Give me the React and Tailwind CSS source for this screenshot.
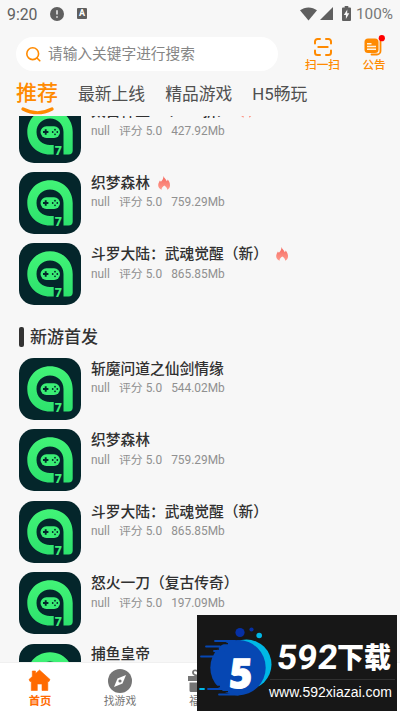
const HOT_GAMES = [
    { name: '太古神王2（0.05折）', size: '427.92Mb', hot: true },
    { name: '织梦森林', size: '759.29Mb', hot: true },
    { name: '斗罗大陆：武魂觉醒（新）', size: '865.85Mb', hot: true },
]

const NEW_GAMES = [
    { name: '斩魔问道之仙剑情缘', size: '544.02Mb' },
    { name: '织梦森林', size: '759.29Mb' },
    { name: '斗罗大陆：武魂觉醒（新）', size: '865.85Mb' },
    { name: '怒火一刀（复古传奇）', size: '197.09Mb' },
    { name: '捕鱼皇帝', size: '312.46Mb' },
]

function StatusBar() {
    return (
        <div className="flex h-[27px] shrink-0 items-center pl-[7px] pr-[7px] text-[#606060]">
            <span className="w-[43px] pt-[2px] text-[15.8px] leading-none">9:20</span>
            <svg className="h-[14px] w-[14px]" viewBox="0 0 14 14">
                <circle cx="7" cy="7" r="7" fill="#5f5f5f" />
                <path d="M7 3.2v4.4M7 9.2v1.6" stroke="#f0f0f0" strokeWidth="1.5" />
            </svg>
            <div className="ml-[13px] flex h-[11px] w-[10px] items-center justify-center rounded-[1px] bg-[#5f5f5f] text-[9px] font-bold leading-none text-white">A</div>
            <svg className="ml-auto h-[14px] w-[17px]" viewBox="0 0 17 14">
                <path d="M0 3.3C4.8-.6 12.2-.6 17 3.3L8.5 13.5Z" fill="#5f5f5f" />
            </svg>
            <svg className="ml-[3px] h-[13px] w-[13px]" viewBox="0 0 13 13">
                <path d="M13 0v13H0Z" fill="#5f5f5f" />
            </svg>
            <svg className="ml-[9px] h-[15px] w-[9px]" viewBox="0 0 9 15">
                <path d="M2.7 0h3.6v1.5H8a1 1 0 0 1 1 1V14a1 1 0 0 1-1 1H1a1 1 0 0 1-1-1V2.5a1 1 0 0 1 1-1h1.7Z" fill="#5f5f5f" />
                <path d="M5.3 3.5 1.8 9h2.1v4l3.4-5.7H5.2Z" fill="#f7f7f7" />
            </svg>
            <span className="ml-[5px] pt-[2px] text-[15.3px] leading-none text-[#777]">100%</span>
        </div>
    )
}

function SearchHeader() {
    return (
        <div className="flex h-[44px] shrink-0 items-start pl-[16px] pt-[10px] text-[#ff8a00]">
            <div className="flex h-[34px] w-[262px] items-center rounded-full bg-white">
                <svg className="ml-[10px] h-[15px] w-[15px]" viewBox="0 0 15 15" fill="none" stroke="#ff8a00" strokeWidth="1.6" strokeLinecap="round">
                    <circle cx="6.7" cy="6.7" r="5.9" />
                    <path d="m11.2 11.2 2.6 2.6" />
                </svg>
                <span className="ml-[7px] text-[14.7px] leading-none text-[#858585]">请输入关键字进行搜索</span>
            </div>
            <div className="ml-[26px] flex w-[37px] flex-col items-center">
                <svg className="mt-[1px] h-[18px] w-[18px]" viewBox="0 0 18 18" fill="none" stroke="#ff8a00" strokeWidth="2" strokeLinecap="round">
                    <path d="M1 5.5V3.5A2.500 2.500 0 0 1 3.500 1H6M12 1h2.500A2.500 2.500 0 0 1 17 3.500v2M17 12.500v2a2.500 2.500 0 0 1-2.500 2.500H12M6 17H3.500A2.500 2.500 0 0 1 1 14.500v-2M4.300 9h9.400" />
                </svg>
                <span className="mt-[2px] whitespace-nowrap text-[11.7px] font-medium leading-[14px]">扫一扫</span>
            </div>
            <div className="ml-[20px] flex w-[26px] flex-col items-center">
                <svg className="-mt-[2px] h-[22px] w-[22px]" viewBox="0 0 22 22">
                    <path d="M17.500 6.500v9.500a3.500 3.500 0 0 1-3.500 3.500H8.500" fill="none" stroke="#ff8a00" strokeWidth="1.8" strokeLinecap="round" />
                    <rect x="1.5" y="3.5" width="14" height="14.5" rx="3.5" fill="#ff8a00" />
                    <path d="M4 8.700h4.500M4 11.500h9M4 14.300h9" stroke="#fff3df" strokeWidth="1.600" />
                    <circle cx="18.8" cy="3.2" r="3.1" fill="#ff0000" />
                </svg>
                <span className="mt-[1px] whitespace-nowrap text-[11.5px] font-medium leading-[14px]">公告</span>
            </div>
        </div>
    )
}

function Tabs() {
    return (
        <div className="flex h-[45px] shrink-0 items-start pl-[16px] pt-[10px] text-[16.8px] leading-[26px] text-[#505050]">
            <div className="flex w-[42px] flex-col items-center">
                <span className="whitespace-nowrap text-[21px] font-medium leading-[25px] text-[#ff8a00]">推荐</span>
                <svg className="mt-[1px] h-[8px] w-[33px]" viewBox="0 0 33 8" fill="none">
                    <path d="M2 2q14.500 7.500 29 0" stroke="#ff8a00" strokeWidth="3.2" strokeLinecap="round" />
                </svg>
            </div>
            <span className="ml-[20px]">最新上线</span>
            <span className="ml-[20px]">精品游戏</span>
            <span className="ml-[20px]">H5畅玩</span>
        </div>
    )
}

function AppIcon() {
    return (
        <svg className="h-[62px] w-[62px] shrink-0" viewBox="0 0 62 62">
            <defs>
                <linearGradient id="ring" x1="0" y1="0" x2="0" y2="1">
                    <stop offset="0" stopColor="#42f477" />
                    <stop offset="1" stopColor="#2de26d" />
                </linearGradient>
            </defs>
            <rect width="62" height="62" rx="15" fill="#04262b" />
            <path
                d="M34.700 53.500H31C18 53.500 8.300 43.800 8.300 31S18 8.300 31 8.300 53.700 18 53.700 31V49.500Q53.700 53.500 49.500 53.500H44.500V31C44.500 23 38.500 17.500 31 17.500S17.500 23 17.500 31 23.500 44 31 44h3.700Z"
                fill="url(#ring)"
            />
            <rect x="21.5" y="25.2" width="19.5" height="11.8" rx="5.9" fill="#3aee75" />
            <path d="M26.700 28.300v5.400M24 31h5.400" stroke="#04262b" strokeWidth="1.9" />
            <g fill="#04262b">
                <circle cx="36" cy="28.7" r=".9" />
                <circle cx="36" cy="33.3" r=".9" />
                <circle cx="33.7" cy="31" r=".9" />
                <circle cx="38.3" cy="31" r=".9" />
            </g>
            <text x="39.4" y="53.6" textAnchor="middle" fontFamily="Roboto" fontSize="12.5" fontWeight="900" fill="#3aee75">7</text>
        </svg>
    )
}

function Flame() {
    return (
        <svg className="h-[14px] w-[12px]" viewBox="0 0 12 14">
            <defs>
                <linearGradient id="flame" x1="0" y1="0" x2="0" y2="1">
                    <stop offset="0" stopColor="#f4685f" />
                    <stop offset="1" stopColor="#ff9b8d" />
                </linearGradient>
            </defs>
            <path d="M5.500 0c.5 2.200 3 3.500 3.200 5.200.6-.3.9-1 1-1.600C11 5 12 7.200 12 9.200c0 2.100-1 3.700-2.900 4.500.3-1.800-1-2.900-2.800-4.200-1.700 1.300-3 2.400-2.600 4.200C1.600 13 .2 11.300.2 9.300c0-2 1-3.200 1.700-4.700l1 1.100C4.500 4.300 5.500 2.400 5.500 0Z" fill="url(#flame)" />
        </svg>
    )
}

function GameRow({ name, size, hot }) {
    return (
        <div className="flex h-[71.4px] shrink-0 items-start">
            <AppIcon />
            <div className="ml-[10px] pt-[0.8px]">
                <div className="flex h-[20px] items-center">
                    <span className="whitespace-nowrap text-[14.75px] font-medium leading-[20px] text-[#303030]">{name}</span>
                    {hot && <div className="ml-[8px]"><Flame /></div>}
                </div>
                <div className="mt-[1.7px] flex whitespace-pre text-[11.9px] leading-[16px] text-[#909090]">
                    <span>null</span>
                    <span className="ml-[9px]">评分 5.0</span>
                    <span className="ml-[9px]">{size}</span>
                </div>
            </div>
        </div>
    )
}

function GameList() {
    return (
        <div className="min-h-0 flex-1 overflow-hidden pl-[19px]">
            <div className="-mt-[15.5px] flex flex-col">
                {HOT_GAMES.map((game) => <GameRow key={game.name} {...game} />)}
                <div className="flex h-[43.3px] shrink-0 items-start pt-[12px]">
                    <div className="h-[20px] w-[5px] rounded-[2px] bg-[#333]" />
                    <span className="ml-[6px] text-[17px] font-medium leading-[21px] text-[#333]">新游首发</span>
                </div>
                {NEW_GAMES.map((game) => <GameRow key={game.name} {...game} />)}
            </div>
        </div>
    )
}

function NavItem({ label, active, children }) {
    return (
        <div className="flex w-[80px] flex-col items-center">
            <svg className="mt-[5.5px] h-[24px] w-[24px]" viewBox="0 0 24 24">{children}</svg>
            <span className={active ? 'mt-[2px] text-[11.3px] font-bold leading-[14px] text-[#ff6a00]' : 'mt-[2px] text-[10.8px] leading-[14px] text-[#757575]'}>{label}</span>
        </div>
    )
}

function BottomNav() {
    return (
        <div className="flex h-[49px] shrink-0 border-t border-[#f0f0f0] bg-white">
            <NavItem label="首页" active>
                <path d="M11.500 1 22 10.500 21 12.500H19.800V21.500H14V15H9.300V21.500H3.300V12.500H2L1 10.500 4.300 7.500V2H7.500V4.600Z" fill="#ff6a00" stroke="#ff6a00" strokeWidth=".6" strokeLinejoin="round" />
            </NavItem>
            <NavItem label="找游戏">
                <circle cx="12" cy="12" r="12" fill="#757575" />
                <path d="m18 6-3.500 8.500L6 18l3.500-8.500Z" fill="#fff" />
                <circle cx="12" cy="12" r="1.6" fill="#757575" />
            </NavItem>
            <NavItem label="福利">
                <path d="M12 7C9 7 4.500 6 5 3c.7-3 5.500-2 7 3 1.500-5 6.300-6 7-3 .5 3-4 4-7 4Z" fill="none" stroke="#757575" strokeWidth="1.8" />
                <path d="M0 7h24v5H0ZM1.500 13.500H11V23H3a1.500 1.500 0 0 1-1.500-1.500ZM13 13.500h9.500V23H13Z" fill="#757575" />
            </NavItem>
        </div>
    )
}

function SiteBanner() {
    return (
        <div className="absolute left-[197px] top-[615px] h-[96px] w-[200px] overflow-hidden bg-[#171717] text-white">
            <svg className="h-full w-full" viewBox="0 0 200 96">
                <circle cx="49.5" cy="49.500" r="25" fill="#00b8e6" />
                <circle cx="41" cy="52.7" r="27.7" fill="#0647b3" />
                <path d="M18 26h20M9 31.500h14M17 36h10M4 41.500h12M11 74h18M22 79.500h19" stroke="#0647b3" strokeWidth="1.8" strokeLinecap="round" />
                <path d="M19 28.700h12M12 34h10M14 71.500h9M19 76.700h12" stroke="#171717" strokeWidth="1.3" />
                <path d="M3 74h4" stroke="#00b8e6" strokeWidth="1.8" strokeLinecap="round" />
                <circle cx="43" cy="17.5" r="4.6" fill="#0630a5" />
                <circle cx="54.500" cy="14.5" r="2.1" fill="#0630a5" />
                <circle cx="62.200" cy="20.5" r="2.8" fill="#00b8e6" />
                <text x="0" y="0" transform="translate(31.5 73) skewX(-4)" textLength="23" lengthAdjust="spacingAndGlyphs" fontFamily="Open Sans" fontSize="41" fontWeight="800" fill="#fff" stroke="#fff" strokeWidth="1">5</text>
                <text x="0" y="0" transform="translate(79 53.500) skewX(-5)" textLength="61" lengthAdjust="spacingAndGlyphs" fontFamily="Roboto" fontSize="34" fontWeight="700" fill="#fff">592</text>
                <text x="140" y="52.5" textLength="54" lengthAdjust="spacingAndGlyphs" fontFamily="Noto Sans CJK SC" fontSize="28.5" fontWeight="900" fill="#fff">下载</text>
                <path d="M73 64.500h125" stroke="#303030" strokeWidth="1" />
            </svg>
            <span className="absolute left-[72px] top-[69px] whitespace-nowrap font-['Liberation_Sans'] text-[14px] leading-[16px]">www.592xiazai.com</span>
        </div>
    )
}

export default function App() {
    return (
        <div className="relative h-[711px] w-[400px] overflow-hidden bg-[#f7f7f7] font-['Roboto','Noto_Sans_CJK_SC',sans-serif]">
            <div className="flex h-full flex-col">
                <StatusBar />
                <SearchHeader />
                <Tabs />
                <GameList />
                <BottomNav />
            </div>
            <SiteBanner />
        </div>
    )
}
